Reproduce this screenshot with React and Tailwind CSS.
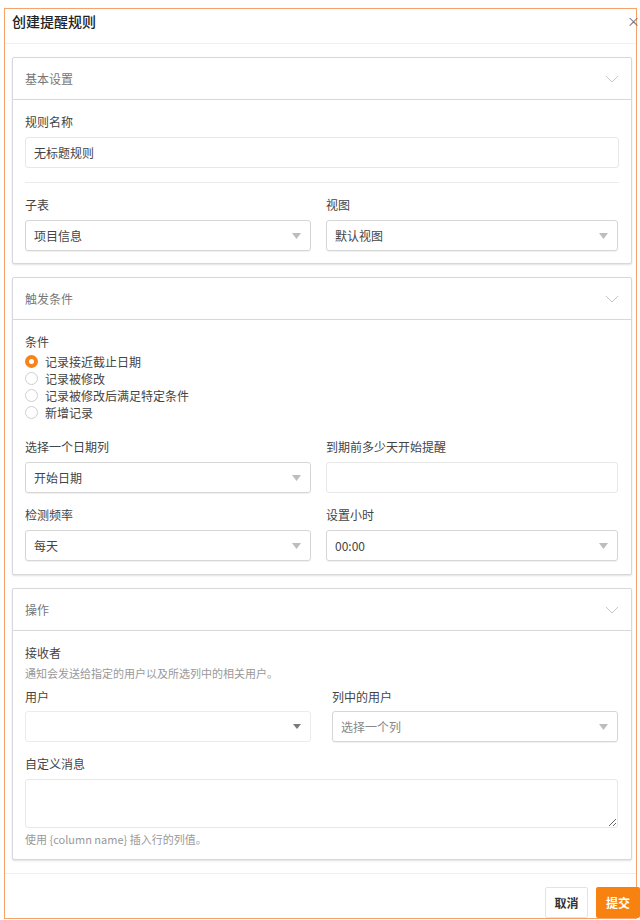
import React from "react";

const font = { fontFamily: '"Noto Sans CJK SC", "Noto Sans", sans-serif' };

function Chevron() {
  return (
    <svg width="14" height="8" viewBox="0 0 14 8" className="text-[#c4c4c4]">
      <path d="M1 1 L7 7 L13 1" fill="none" stroke="currentColor" strokeWidth="1" />
    </svg>
  );
}

function Arrow({ dark }) {
  return dark ? (
    <svg width="8" height="5" viewBox="0 0 8 5">
      <path d="M0 0 H8 L4 5 Z" fill="#7a7a7a" />
    </svg>
  ) : (
    <svg width="9" height="6" viewBox="0 0 9 6">
      <path d="M0 0 H9 L4.5 6 Z" fill="#bdbdbd" />
    </svg>
  );
}

function Panel({ title, children, pb = "pb-[12px]" }) {
  return (
    <div className="border border-[#d8d8d8] rounded-[2px] shadow-[0_1px_2px_rgba(0,0,0,0.12)] bg-white">
      <div className="h-[42px] flex items-center justify-between pl-[12px] pr-[12px] border-b border-[#d8d8d8]">
        <span className="text-[12px] text-[#777]">{title}</span>
        <Chevron />
      </div>
      <div className={"px-[12px] pt-[15px] " + pb}>{children}</div>
    </div>
  );
}

function Label({ children, className = "" }) {
  return <div className={"text-[12px] leading-[14px] text-[#444] " + className}>{children}</div>;
}

function Select({ value, placeholder, dark, light }) {
  return (
    <div
      className={
        "h-[31px] flex items-center justify-between border rounded-[3px] pl-[8px] pr-[9px] " +
        (light ? "border-[#ececec]" : "border-[#d6d6d6] shadow-[0_1px_1px_rgba(0,0,0,0.06)]")
      }
    >
      <span className={"text-[12px] " + (placeholder ? "text-[#888]" : "text-[#444]")}>{value}</span>
      <Arrow dark={dark} />
    </div>
  );
}

function Radio({ checked, label }) {
  return (
    <div className="flex items-center h-[17px]">
      {checked ? (
        <span className="w-[13px] h-[13px] rounded-full border-[4px] border-[#f5841f] bg-white" />
      ) : (
        <span className="w-[13px] h-[13px] rounded-full border border-[#cfcfcf] bg-white" />
      )}
      <span className="ml-[7px] text-[12px] text-[#444]">{label}</span>
    </div>
  );
}

export default function App() {
  return (
    <div className="w-[640px] h-[920px] bg-white overflow-hidden" style={font}>
      <div className="ml-[4px] mt-[8px] w-[633px] h-[911px] border border-[#f5a36a] flex flex-col">
        <div className="h-[35px] flex items-start justify-between pl-[7px] pt-[2px] border-b border-[#f0f0f0] shrink-0">
          <span className="text-[14px] font-medium text-[#222] leading-[20px]">创建提醒规则</span>
          <span className="text-[13px] text-[#666] leading-[20px] mr-[-4px]">×</span>
        </div>

        <div className="pl-[7px] pr-[4px] pt-[13px] flex flex-col gap-[13px]">
          <Panel title="基本设置">
            <Label>规则名称</Label>
            <div className="mt-[8px] h-[31px] border border-[#e8e8e8] rounded-[3px] flex items-center pl-[8px]">
              <span className="text-[12px] text-[#444]">无标题规则</span>
            </div>
            <div className="mt-[14px] border-t border-[#ebebeb]" />
            <div className="mt-[15px] grid grid-cols-[286px_292px] gap-x-[15px]">
              <div>
                <Label>子表</Label>
                <div className="mt-[8px]">
                  <Select value="项目信息" />
                </div>
              </div>
              <div>
                <Label>视图</Label>
                <div className="mt-[8px]">
                  <Select value="默认视图" />
                </div>
              </div>
            </div>
          </Panel>

          <Panel title="触发条件" pb="pb-[13px]">
            <Label>条件</Label>
            <div className="mt-[4px] flex flex-col">
              <Radio checked label="记录接近截止日期" />
              <Radio label="记录被修改" />
              <Radio label="记录被修改后满足特定条件" />
              <Radio label="新增记录" />
            </div>
            <div className="mt-[19px] grid grid-cols-[286px_292px] gap-x-[15px]">
              <div>
                <Label>选择一个日期列</Label>
                <div className="mt-[8px]">
                  <Select value="开始日期" />
                </div>
              </div>
              <div>
                <Label>到期前多少天开始提醒</Label>
                <div className="mt-[8px] h-[31px] border border-[#e8e8e8] rounded-[3px]" />
              </div>
            </div>
            <div className="mt-[15px] grid grid-cols-[286px_292px] gap-x-[15px]">
              <div>
                <Label>检测频率</Label>
                <div className="mt-[8px]">
                  <Select value="每天" />
                </div>
              </div>
              <div>
                <Label>设置小时</Label>
                <div className="mt-[8px]">
                  <Select value="00:00" />
                </div>
              </div>
            </div>
          </Panel>

          <Panel title="操作" pb="pb-[13px]">
            <Label className="text-[#333]">接收者</Label>
            <div className="mt-[6px] text-[11px] leading-[14px] text-[#999]">通知会发送给指定的用户以及所选列中的相关用户。</div>
            <div className="mt-[10px] grid grid-cols-[286px_286px] gap-x-[21px]">
              <div>
                <Label>用户</Label>
                <div className="mt-[7px]">
                  <Select value="" dark light />
                </div>
              </div>
              <div>
                <Label>列中的用户</Label>
                <div className="mt-[7px]">
                  <Select value="选择一个列" placeholder />
                </div>
              </div>
            </div>
            <Label className="mt-[15px]">自定义消息</Label>
            <textarea className="mt-[8px] block w-[593px] h-[49px] border border-[#e8e8e8] rounded-[3px] outline-none" />
            <div className="mt-[4px] text-[11px] leading-[14px] text-[#999]">使用 {"{column name}"} 插入行的列值。</div>
          </Panel>
        </div>

        <div className="mt-[13px] border-t border-[#eeeeee]" />
        <div className="flex justify-end items-start pt-[13px] gap-[8px] mr-[-4px]">
          <button className="w-[43px] h-[31px] border border-[#e3e3e3] rounded-[2px] bg-white text-[12px] font-bold text-[#333]">取消</button>
          <button className="w-[44px] h-[31px] rounded-[2px] bg-[#f7820f] text-[12px] font-bold text-white">提交</button>
        </div>
      </div>
    </div>
  );
}
